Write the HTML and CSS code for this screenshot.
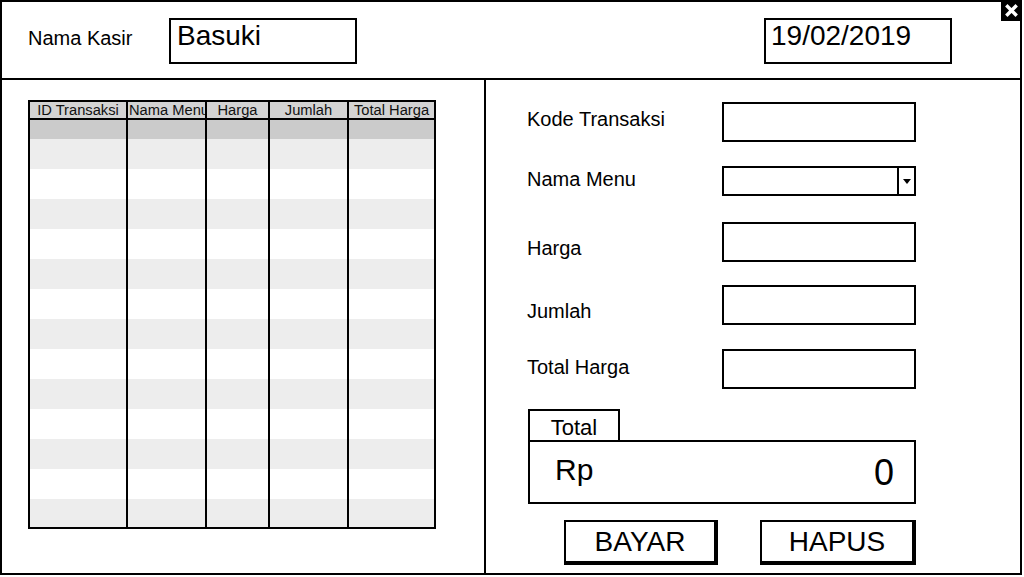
FILE: index.html
```html
<!DOCTYPE html>
<html lang="id">
<head>
<meta charset="utf-8">
<title>Kasir</title>
<link rel="stylesheet" href="styles.css">
</head>
<body>
<div class="window">
  <div class="close">
    <svg width="21" height="21" viewBox="0 0 21 21"><rect width="21" height="21" fill="#000"/><path d="M6.5 6.5 L14.5 14.5 M14.5 6.5 L6.5 14.5" stroke="#fff" stroke-width="3.4" stroke-linecap="square"/></svg>
  </div>
  <header class="topbar">
    <span class="kasir-label">Nama Kasir</span>
    <div class="box name-box">Basuki</div>
    <div class="box date-box">19/02/2019</div>
  </header>
  <main class="main">
    <section class="left">
      <div class="table">
        <div class="thead">
          <div class="th">ID Transaksi</div>
          <div class="th">Nama Menu</div>
          <div class="th">Harga</div>
          <div class="th">Jumlah</div>
          <div class="th">Total Harga</div>
        </div>
        <div class="tbody">
          <div class="tr selected"><div class="td"></div><div class="td"></div><div class="td"></div><div class="td"></div><div class="td"></div></div>
          <div class="tr"><div class="td"></div><div class="td"></div><div class="td"></div><div class="td"></div><div class="td"></div></div>
          <div class="tr"><div class="td"></div><div class="td"></div><div class="td"></div><div class="td"></div><div class="td"></div></div>
          <div class="tr"><div class="td"></div><div class="td"></div><div class="td"></div><div class="td"></div><div class="td"></div></div>
          <div class="tr"><div class="td"></div><div class="td"></div><div class="td"></div><div class="td"></div><div class="td"></div></div>
          <div class="tr"><div class="td"></div><div class="td"></div><div class="td"></div><div class="td"></div><div class="td"></div></div>
          <div class="tr"><div class="td"></div><div class="td"></div><div class="td"></div><div class="td"></div><div class="td"></div></div>
          <div class="tr"><div class="td"></div><div class="td"></div><div class="td"></div><div class="td"></div><div class="td"></div></div>
          <div class="tr"><div class="td"></div><div class="td"></div><div class="td"></div><div class="td"></div><div class="td"></div></div>
          <div class="tr"><div class="td"></div><div class="td"></div><div class="td"></div><div class="td"></div><div class="td"></div></div>
          <div class="tr"><div class="td"></div><div class="td"></div><div class="td"></div><div class="td"></div><div class="td"></div></div>
          <div class="tr"><div class="td"></div><div class="td"></div><div class="td"></div><div class="td"></div><div class="td"></div></div>
          <div class="tr"><div class="td"></div><div class="td"></div><div class="td"></div><div class="td"></div><div class="td"></div></div>
          <div class="tr"><div class="td"></div><div class="td"></div><div class="td"></div><div class="td"></div><div class="td"></div></div>
        </div>
      </div>
    </section>
    <section class="right">
      <div class="frow r1"><span class="flabel">Kode Transaksi</span><div class="input"></div></div>
      <div class="frow r2"><span class="flabel">Nama Menu</span><div class="select"><div class="select-value"></div><div class="select-btn"><span class="caret"></span></div></div></div>
      <div class="frow r3"><span class="flabel">Harga</span><div class="input"></div></div>
      <div class="frow r4"><span class="flabel">Jumlah</span><div class="input"></div></div>
      <div class="frow r5"><span class="flabel">Total Harga</span><div class="input"></div></div>
      <div class="total">
        <div class="total-tab">Total</div>
        <div class="total-box"><span class="rp">Rp</span><span class="amount">0</span></div>
      </div>
      <div class="buttons">
        <button class="btn bayar">BAYAR</button>
        <button class="btn hapus">HAPUS</button>
      </div>
    </section>
  </main>
</div>
</body>
</html>
```
FILE: styles.css
```css
* { box-sizing: border-box; }
html, body { margin: 0; padding: 0; background: #fff; }
body { font-family: "Liberation Sans", Arial, sans-serif; color: #000; }

.window {
  position: relative;
  width: 1022px;
  height: 575px;
  border: 2px solid #000;
  display: flex;
  flex-direction: column;
}
.close {
  position: absolute;
  top: -2px;
  right: -2px;
  width: 21px;
  height: 21px;
  line-height: 0;
}

.topbar {
  height: 78px;
  border-bottom: 2px solid #000;
  display: flex;
  align-items: center;
  padding: 0 68px 0 26px;
  flex: none;
}
.kasir-label {
  width: 141px;
  font-size: 20px;
  line-height: 23px;
  margin-bottom: 3px;
}
.box {
  width: 188px;
  height: 46px;
  border: 2px solid #000;
  font-size: 28px;
  line-height: 28px;
  padding: 2px 0 0 6px;
  margin-top: 2px;
}
.date-box { margin-left: auto; padding-left: 5px; }

.main {
  flex: 1;
  display: flex;
}
.left {
  width: 484px;
  border-right: 2px solid #000;
  padding: 20px 0 0 26px;
}
.table {
  width: 408px;
  height: 429px;
  border: 2px solid #000;
  display: flex;
  flex-direction: column;
}
.thead, .tr {
  display: grid;
  grid-template-columns: 98px 79px 63px 79px 85px;
}
.thead {
  height: 18px;
  background: #d3d3d3;
  border-bottom: 2px solid #000;
}
.th {
  font-size: 14.7px;
  line-height: 16px;
  text-align: center;
  white-space: nowrap;
  overflow: hidden;
  padding: 0 1px;
  border-right: 2px solid #000;
  color: #111;
}
.th:last-child { border-right: none; }
.tbody {
  flex: 1;
  overflow: hidden;
}
.tr { height: 30px; }
.tr:nth-child(even) { background: #ededed; }
.tr.selected { height: 19px; background: #cbcbcb; }
.td { border-right: 2px solid #000; }
.td:last-child { border-right: none; }

.right {
  flex: 1;
  padding: 22px 0 0 41px;
  display: flex;
  flex-direction: column;
}
.frow {
  display: flex;
  align-items: flex-start;
}
.flabel {
  width: 195px;
  font-size: 20px;
  line-height: 23px;
}
.r1 .flabel { margin-top: 6px; }
.r2 { margin-top: 24px; }
.r2 .flabel { margin-top: 2px; }
.r3 { margin-top: 26px; }
.r3 .flabel { margin-top: 15px; }
.r4 { margin-top: 23px; }
.r4 .flabel { margin-top: 15px; }
.r5 { margin-top: 24px; }
.r5 .flabel { margin-top: 7px; }

.input {
  width: 194px;
  height: 40px;
  border: 2px solid #000;
}
.select {
  width: 194px;
  height: 30px;
  border: 2px solid #000;
  display: flex;
}
.select-value { flex: 1; }
.select-btn {
  width: 17px;
  border-left: 2px solid #000;
  display: flex;
  align-items: center;
  justify-content: center;
}
.caret {
  width: 0;
  height: 0;
  border-left: 4px solid transparent;
  border-right: 4px solid transparent;
  border-top: 5px solid #000;
}

.total {
  margin: 20px 0 0 1px;
}
.total-tab {
  width: 92px;
  height: 31px;
  border: 2px solid #000;
  border-bottom: none;
  font-size: 22px;
  line-height: 30px;
  text-align: center;
  padding-top: 2px;
}
.total-box {
  width: 388px;
  height: 64px;
  border: 2px solid #000;
  display: flex;
  align-items: center;
  justify-content: space-between;
  padding: 0 20px 0 25px;
}
.rp {
  font-size: 30px;
  line-height: 34px;
  margin-top: -4px;
}
.amount {
  font-size: 36px;
  line-height: 40px;
  margin-top: 2px;
}

.buttons {
  margin: 16px 0 0 37px;
  display: flex;
  gap: 42px;
}
.btn {
  height: 45px;
  background: #fff;
  border: 2px solid #000;
  border-right-width: 4px;
  border-bottom-width: 4px;
  font-family: "Liberation Sans", Arial, sans-serif;
  font-size: 28px;
  line-height: 36px;
  padding: 0;
  color: #000;
}
.bayar { width: 154px; }
.hapus { width: 156px; }
```
